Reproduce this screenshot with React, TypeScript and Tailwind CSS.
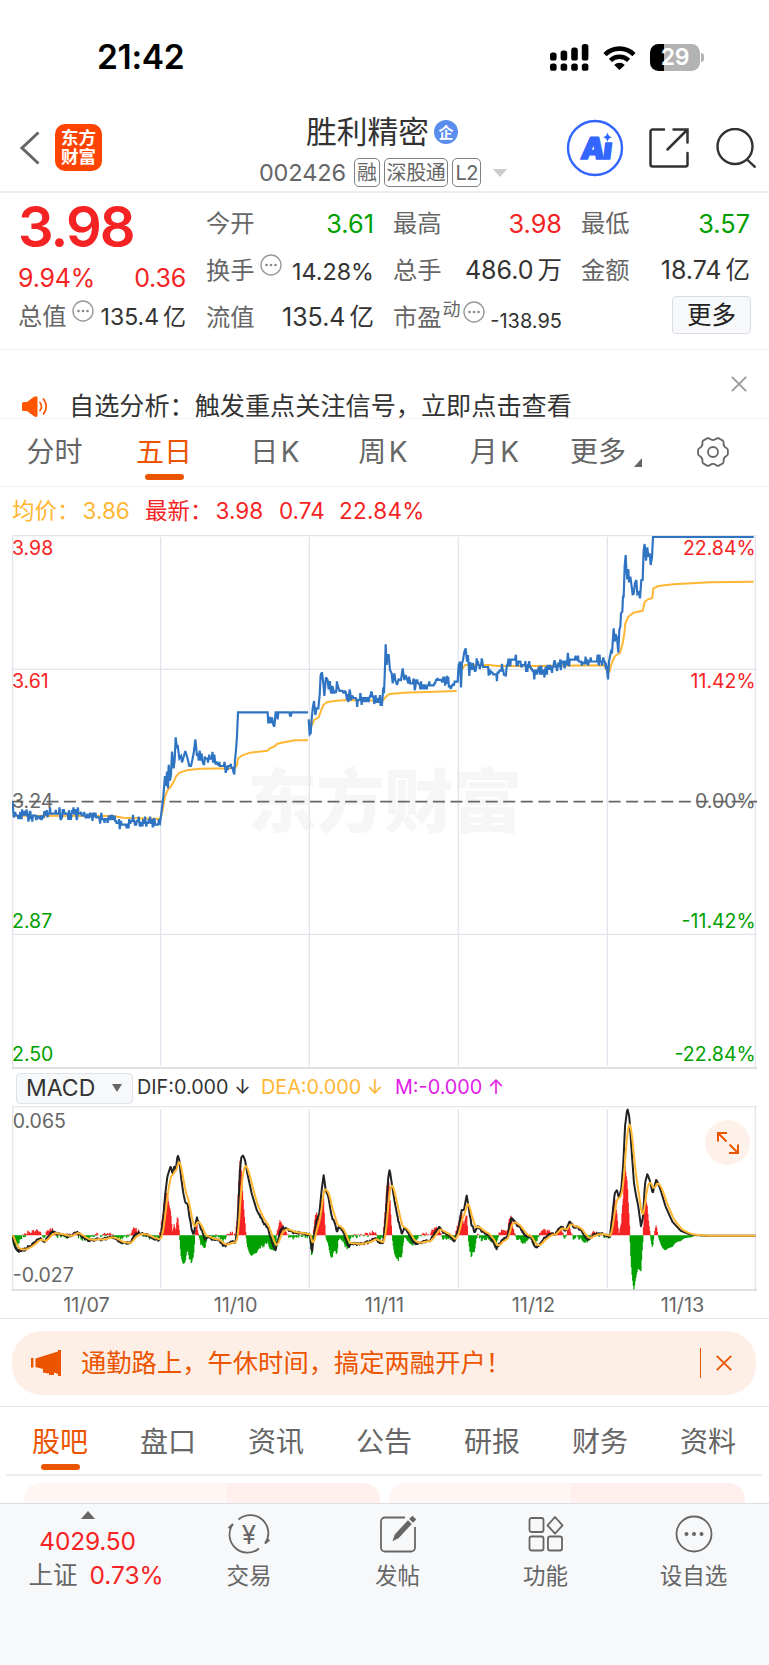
import type { ReactNode } from "react";
import clsx from "clsx";

type Point = [number, number];

// Charts are drawn in a space three times the size they take on the page
const CHART_W = 2235;
const DAYS = ["11/07", "11/10", "11/11", "11/12", "11/13"];
const DAY_LINES = [446, 892, 1339, 1786];

function shift(dx: number, dy: number, points: Point[]): Point[] {
  return points.map(([x, y]) => [x + dx, y + dy]);
}

function toPath(points: Point[]) {
  return points.map(([x, y], i) => `${i ? "L" : "M"}${x.toFixed(1)} ${y.toFixed(1)}`).join("");
}

function sample(points: Point[], step: number): Point[] {
  const out: Point[] = [];
  let i = 0;
  const end = points[points.length - 1][0];
  for (let x = points[0][0]; x <= end; x += step) {
    while (i < points.length - 2 && points[i + 1][0] < x) i++;
    const [x0, y0] = points[i];
    const [x1, y1] = points[i + 1];
    const t = x1 === x0 ? 0 : (x - x0) / (x1 - x0);
    out.push([x, y0 + (y1 - y0) * t]);
  }
  return out;
}

function random(seed: number) {
  let s = seed;
  return () => {
    s = (s * 16807) % 2147483647;
    return s / 2147483647;
  };
}

// Minute prices move in ticks of 0.01, about 11 units of height
function addTicks(points: Point[], seed: number, tick = 12): Point[] {
  const next = random(seed);
  const out: Point[] = [];
  sample(points, 1.9).forEach(([x, y]) => {
    const r = next();
    let jump = r < 0.17 ? -tick : r > 0.82 ? tick : 0;
    if (r < 0.04 || r > 0.95) jump *= 1.7;
    out.push([x, Math.round(y / 5.5) * 5.5 + jump]);
  });
  return out;
}

const day1 = addTicks(
  shift(-36, -15, [
    [38, 835], [43, 857], [112, 857], [120, 866], [132, 864], [140, 852], [240, 852], [250, 858],
    [276, 864], [342, 866], [352, 880], [385, 884], [396, 872], [428, 878], [474, 882], [480, 880],
  ]),
  17,
  11
);

const day2a = shift(-36, -15, [
  [480, 880], [485, 842], [490, 800], [495, 738], [498, 768], [501, 725], [504, 775], [506, 704],
  [510, 752], [513, 735], [516, 665], [521, 715], [524, 690], [527, 622], [531, 655], [533, 645],
  [538, 685], [543, 678], [546, 697], [556, 663], [562, 683], [568, 708], [573, 708], [577, 690],
  [581, 670], [586, 628], [591, 678], [594, 670], [596, 692], [599, 662], [603, 692],
]);
const day2b = addTicks(
  shift(-36, -15, [[605, 690], [612, 702], [616, 688], [643, 688], [655, 706], [700, 712]]),
  5,
  12
);
const day2c = shift(-36, -15, [
  [703, 733], [705, 690], [708, 660], [711, 618], [714, 547], [803, 547], [805, 580], [808, 560],
  [811, 580], [816, 562], [819, 582], [823, 590], [827, 547], [831, 547], [833, 568], [835, 547],
  [868, 547], [870, 557], [873, 557], [875, 547], [924, 547],
]);

const day3 = [
  ...shift(864, 195, [
    [26, 358], [29, 403], [32, 400], [35, 358], [38, 325], [42, 303], [46, 345], [50, 325], [55, 325],
    [59, 285], [62, 225], [66, 217], [70, 250], [73, 288], [78, 232], [83, 240], [86, 268],
  ]),
  ...addTicks(
    shift(864, 195, [
      [88, 265], [94, 280], [105, 275], [112, 255], [118, 270], [134, 278], [140, 300], [150, 287],
      [170, 298], [200, 296], [218, 288], [228, 308], [236, 303], [247, 303],
    ]),
    23
  ),
  ...shift(864, 195, [
    [250, 262], [252, 280], [255, 200], [257, 133], [260, 195], [263, 165], [266, 165], [270, 210],
    [275, 220], [278, 250], [283, 220], [286, 240], [291, 255], [296, 238], [303, 240], [308, 205],
    [313, 240], [317, 225], [325, 250],
  ]),
  ...addTicks(
    shift(864, 195, [
      [327, 250], [350, 250], [370, 258], [400, 256], [412, 236], [430, 245], [442, 240], [452, 268],
      [462, 245], [471, 242],
    ]),
    31
  ),
];

const day4 = [
  ...shift(864, 195, [
    [473, 245], [476, 195], [480, 185], [483, 262], [486, 190], [489, 180], [493, 155], [497, 145],
    [501, 185], [504, 165], [508, 228],
  ]),
  ...addTicks(
    shift(864, 195, [
      [511, 208], [530, 196], [562, 200], [572, 215], [585, 225], [600, 213], [618, 215], [624, 180],
      [636, 180], [662, 185], [668, 196], [688, 196], [700, 215], [735, 213], [748, 205], [770, 202],
      [776, 190], [798, 182], [830, 180], [855, 190], [870, 185], [915, 186], [920, 205],
    ]),
    47
  ),
];

const day5 = shift(1644, -45, [
  [137, 430], [140, 440], [144, 478], [147, 425], [150, 408], [153, 395], [156, 400], [159, 352],
  [161, 325], [164, 365], [167, 342], [171, 355], [175, 398], [178, 330], [181, 320], [183, 280],
  [187, 275], [189, 230], [191, 230], [194, 140], [197, 105], [199, 145], [202, 178], [205, 147],
  [207, 187], [211, 170], [214, 192], [218, 223], [221, 222], [225, 190], [229, 180], [232, 222],
  [236, 218], [240, 235], [244, 180], [248, 180], [251, 90], [254, 72], [258, 122], [262, 82],
  [265, 110], [269, 100], [272, 135], [276, 112], [279, 51], [581, 51],
]);

const averages = [
  shift(-36, -15, [[38, 857], [338, 858], [370, 863], [480, 867]]),
  shift(-36, -15, [
    [480, 867], [487, 845], [495, 800], [502, 782], [512, 770], [520, 757], [528, 740], [538, 728],
    [560, 721], [600, 716], [705, 715], [711, 705], [714, 686], [725, 677], [750, 668], [802, 662],
    [810, 655], [825, 648], [832, 641], [860, 635], [885, 631], [924, 631],
  ]),
  shift(864, 195, [
    [26, 360], [36, 375], [42, 360], [56, 352], [64, 330], [70, 315], [82, 306], [110, 302], [140, 300],
    [248, 302], [258, 290], [268, 282], [310, 278], [380, 276], [470, 273],
  ]),
  shift(864, 195, [
    [480, 208], [488, 205], [495, 195], [570, 195], [590, 198], [700, 198], [915, 196], [922, 215],
  ]),
  shift(1644, -45, [
    [137, 455], [148, 455], [155, 430], [165, 408], [180, 399], [188, 370], [193, 340], [196, 310],
    [205, 290], [220, 278], [248, 272], [254, 246], [262, 239], [277, 234], [280, 205], [295, 198],
    [340, 193], [450, 187], [581, 185],
  ]),
];

const MACD_ZERO = 388;

const difBase: Point[] = [
  ...shift(-36, -138, [
    [38, 530], [45, 560], [55, 573], [75, 568], [90, 558], [105, 545], [120, 535], [135, 545],
    [155, 515], [175, 522], [200, 528], [215, 525], [228, 515], [240, 525], [262, 540], [300, 538],
    [335, 532], [350, 538], [370, 550], [390, 548], [405, 525], [420, 518], [440, 525], [455, 532],
    [475, 540], [483, 525], [490, 470], [496, 400], [502, 350], [512, 318], [518, 343], [523, 318],
    [527, 330], [533, 285], [538, 300], [543, 350], [550, 400], [556, 428], [563, 432], [570, 480],
    [575, 510], [580, 525], [585, 500], [591, 475], [596, 490], [605, 510], [615, 540], [625, 530],
    [640, 538], [655, 540], [672, 558], [690, 548], [707, 545], [712, 500], [716, 420], [720, 330],
    [724, 292], [729, 286], [735, 300], [742, 340], [755, 400], [770, 450], [790, 488], [805, 508],
    [815, 545], [826, 573], [832, 545], [840, 515], [850, 503], [865, 508], [880, 518], [900, 520],
    [928, 523], [932, 545], [936, 578], [943, 520], [950, 480], [958, 460], [965, 390], [971, 345],
    [977, 390], [985, 410], [995, 470], [1003, 485], [1010, 515], [1018, 500], [1030, 515],
    [1045, 560], [1055, 550], [1075, 552], [1110, 545], [1125, 535], [1135, 545], [1150, 546],
  ]),
  ...shift(1116, -138, [
    [3, 500], [8, 420], [13, 350], [17, 328], [24, 375], [32, 425], [40, 468], [48, 503], [54, 522],
    [62, 503], [75, 525], [90, 550], [120, 545], [140, 540], [150, 525], [165, 500], [178, 515],
    [195, 525], [212, 545], [222, 510], [228, 480], [233, 450], [240, 450], [248, 405], [255, 450],
    [262, 490], [272, 515], [282, 500], [295, 515], [315, 525], [328, 545], [338, 565], [350, 545],
    [370, 532], [376, 500], [382, 475], [395, 490], [410, 505], [425, 530], [440, 528], [450, 555],
    [462, 562], [475, 540], [495, 525], [515, 522], [530, 500], [545, 510], [557, 487], [570, 500],
    [585, 505], [600, 525], [612, 540], [630, 525], [655, 522], [678, 530], [684, 480], [692, 400],
    [699, 390], [705, 415], [712, 385], [718, 310], [723, 200], [730, 145], [736, 170], [742, 260],
    [750, 370], [755, 400], [763, 440], [771, 500], [777, 470], [783, 370], [790, 342], [797, 360],
    [806, 400], [817, 358], [828, 385], [845, 440], [865, 485], [890, 512], [920, 524], [960, 527],
    [1116, 527],
  ]),
];

// DEA follows DIF as a moving average, the bars show twice the gap between them
function buildMacd() {
  const next = random(91);
  const dif = sample(difBase, 1.9).map(([x, y]): Point => {
    const quiet = Math.abs(y - MACD_ZERO) < 60 && x < 1800;
    return [x, quiet ? y + (next() - 0.5) * 8 : y];
  });
  let prev = MACD_ZERO;
  const dea = dif.map(([x, y]): Point => {
    prev += (y - prev) * 0.2;
    return [x, prev];
  });
  const bars = dif.map(([x, y], i): Point => [x, (y - dea[i][1]) * 2]);
  const area = (up: boolean) =>
    bars
      .filter(([, h]) => (up ? h < -1 : h > 1))
      .map(([x, h]) => `M${x.toFixed(1)} ${MACD_ZERO}v${h.toFixed(1)}`)
      .join("");
  return { dif: toPath(dif), dea: toPath(dea), up: area(true), down: area(false) };
}

const macd = buildMacd();

function InfoDots({ className }: { className?: string }) {
  return (
    <svg viewBox="0 0 22 22" className={clsx("size-[22px] shrink-0", className)}>
      <circle cx="11" cy="11" r="10" fill="none" stroke="#999" strokeWidth="1.4" />
      <circle cx="6.5" cy="11" r="1.3" fill="#888" />
      <circle cx="11" cy="11" r="1.3" fill="#888" />
      <circle cx="15.5" cy="11" r="1.3" fill="#888" />
    </svg>
  );
}

function StatusBar() {
  return (
    <div className="flex h-[105px] items-center justify-between pt-[10px] pr-[65px] pl-[97px]">
      <span className="text-[33.5px] font-semibold tracking-[-0.3px] text-black">21:42</span>
      <div className="flex items-center gap-[14px]">
        <svg viewBox="0 0 39 27" className="h-[27px] w-[39px]">
          {[8.5, 6.5, 3.5, 0].map((y, i) => (
            <g key={i}>
              <rect x={i * 10.6} y={y} width="6.6" height={16.5 - y} rx="2.6" />
              <rect x={i * 10.6} y="19.5" width="6.6" height="7.3" rx="2.6" />
            </g>
          ))}
        </svg>
        <svg viewBox="0 0 33 24" className="h-[24px] w-[33px]">
          <path d="M2 8.6a20.6 20.6 0 0 1 29 0" fill="none" stroke="#000" strokeWidth="4.6" />
          <path d="M7.4 14.4a13 13 0 0 1 18.2 0" fill="none" stroke="#000" strokeWidth="4.4" />
          <path d="M11.2 18.9a7.6 7.6 0 0 1 10.6 0L16.5 24z" />
        </svg>
        <div className="flex items-center gap-[1px]">
          <div className="flex h-[27px] w-[50px] items-center justify-center rounded-[8.5px] bg-[linear-gradient(90deg,#000_29%,#b3b3b3_29%)] text-[23px] font-semibold tracking-[-0.3px] text-white">
            29
          </div>
          <div className="h-[9px] w-[3px] rounded-r-full bg-[#b3b3b3]" />
        </div>
      </div>
    </div>
  );
}

function Tag({ children }: { children: ReactNode }) {
  return (
    <span className="flex h-[29px] items-center rounded-[5px] border-[1.5px] border-[#808080] px-[2px] text-[20px] leading-none tracking-[-0.4px] text-[#666]">
      {children}
    </span>
  );
}

function Header() {
  return (
    <header className="flex h-[88px] border-b-2 border-[#eee]">
      <div className="flex w-[200px] items-center pl-[19px]">
        <svg viewBox="0 0 22 34" className="h-[34px] w-[22px]" fill="none" stroke="#666" strokeWidth="3">
          <path d="M19.5 1.5L3 17l16.5 15.5" />
        </svg>
        <div className="-mt-[2px] ml-[14px] flex h-[47px] w-[47px] flex-col items-center justify-center rounded-[10px] bg-[#ff4400] pb-[1px] text-[17.5px] leading-[19px] font-bold text-white">
          <span>东方</span>
          <span>财富</span>
        </div>
      </div>
      <div className="flex w-[366px] flex-col items-center pt-[8px]">
        <div className="flex h-[38px] items-center gap-[5px] pr-[2px]">
          <h1 className="text-[30.8px] leading-none text-[#333]">胜利精密</h1>
          <span className="flex size-[24px] items-center justify-center rounded-full bg-[#5b8def] text-[15px] leading-none font-bold text-white">
            企
          </span>
        </div>
        <div className="mt-[6px] flex h-[31px] items-center gap-[4px]">
          <span className="mr-[4px] text-[23.5px] leading-none tracking-[-0.1px] text-[#666]">002426</span>
          <Tag>融</Tag>
          <Tag>深股通</Tag>
          <Tag>L2</Tag>
          <svg viewBox="0 0 14 8" className="ml-[8px] h-[8px] w-[14px]" fill="#ccc">
            <path d="M0 0h14L7 8z" />
          </svg>
        </div>
      </div>
      <div className="flex items-center">
        <svg viewBox="0 0 58 58" className="size-[58px]">
          <text
            x="14.5"
            y="40"
            fontSize="30"
            fontWeight="900"
            fill="#3366ff"
            stroke="#3366ff"
            strokeWidth="1.4"
            strokeLinejoin="round"
            transform="translate(4.500 0) skewX(-7)"
            textLength="31"
          >
            Ai
          </text>
          <path d="M35 10h15v13.200H35z" fill="#fff" />
          <circle cx="29" cy="29" r="27" fill="none" stroke="#3366ff" strokeWidth="2.400" />
          <path d="M41.5 13.500q.8 4 4.700 4.800q-3.900.8-4.700 4.800q-.8-4-4.700-4.800q3.900-.8 4.700-4.800z" fill="#3366ff" />
        </svg>
        <svg
          viewBox="0 0 40 40"
          className="ml-[25px] size-[40px]"
          fill="none"
          stroke="#333"
          strokeWidth="2.5"
          strokeLinecap="round"
        >
          <path d="M15 1.5H3.5a2 2 0 0 0-2 2v33a2 2 0 0 0 2 2h33a2 2 0 0 0 2-2V25M24.5 1.5h14V14.5M38 2L18.5 21.5" />
        </svg>
        <svg viewBox="0 0 40 40" className="ml-[27px] size-[40px]" fill="none" stroke="#333" strokeWidth="2.4">
          <circle cx="19" cy="18.5" r="17.5" />
          <path d="M31 31.5l8.5 8" />
        </svg>
      </div>
    </header>
  );
}

function Stat({ label, value, tone }: { label: ReactNode; value: string; tone?: string }) {
  const unit = value.match(/[亿万]$/)?.[0];
  return (
    <div className="flex h-[47px] items-center justify-between text-[24.3px] leading-none whitespace-nowrap">
      <span className="flex items-center text-[#666]">{label}</span>
      <span className={tone ?? "text-[25px] text-[#333]"}>
        {unit ? value.slice(0, -1) : value}
        {unit && <span className="ml-[4px] text-[24.5px]">{unit}</span>}
      </span>
    </div>
  );
}

function Quote() {
  return (
    <section className="grid h-[157px] grid-cols-[168px_168px_168px_168px] gap-x-[20px] border-b border-[#f0f0f0] pl-[18px]">
      <div>
        <div className="flex h-[68px] items-center text-[56px] leading-none font-semibold tracking-[-1.9px] text-[#f52323]">
          3.98
        </div>
        <div className="flex h-[34px] items-center justify-between text-[25px] leading-none tracking-[-0.2px] text-[#f52323]">
          <span>9.94%</span>
          <span>0.36</span>
        </div>
        <div className="flex h-[43px] items-center justify-between text-[24.3px] leading-none text-[#666]">
          <span className="flex">
            总值
            <InfoDots className="-mt-[4px] ml-[5px]" />
          </span>
          <span className="pt-[2px] text-[23px] text-[#333]">
            135.4<span className="ml-[4px]">亿</span>
          </span>
        </div>
      </div>
      <div className="pt-[7px]">
        <Stat label="今开" value="3.61" tone="text-[#00a000] text-[25.3px]" />
        <Stat
          label={
            <>
              换手
              <InfoDots className="-mt-[10px] ml-[5px]" />
            </>
          }
          value="14.28%"
          tone="text-[#333] text-[23.3px] pt-[2px]"
        />
        <Stat label="流值" value="135.4亿" />
      </div>
      <div className="-ml-[1px] w-[169px] pt-[7px]">
        <Stat label="最高" value="3.98" tone="text-[#f52323] text-[25.3px]" />
        <Stat label="总手" value="486.0万" />
        <Stat
          label={
            <>
              市盈
              <span className="-mt-[14px] ml-[1px] text-[18px]">动</span>
              <InfoDots className="-mt-[10px] ml-[2px]" />
            </>
          }
          value="-138.95"
          tone="text-[#333] text-[20px] pt-[6px]"
        />
      </div>
      <div className="-ml-[1px] w-[169px] pt-[7px]">
        <Stat label="最低" value="3.57" tone="text-[#00a000] text-[25.3px]" />
        <Stat label="金额" value="18.74亿" />
        <button className="mt-[2px] -mr-[1px] ml-auto flex h-[38px] w-[79px] items-center justify-center rounded-[4px] border border-[#d9dce3] bg-[#f7f8fa] text-[24.5px] leading-none text-[#222]">
          更多
        </button>
      </div>
    </section>
  );
}

function Notice() {
  return (
    <section className="flex h-[69px] items-start border-b border-[#f3f3f3] pr-[22px] pl-[22px]">
      <svg viewBox="0 0 26 21" className="mt-[46px] h-[21px] w-[26px]" fill="#ff5500">
        <path d="M0 7.5q0-1.5 1.5-1.5H5L12 .8Q15.5-1 15.5 2v17q0 3-3.5 1.2L5 15H1.5Q0 15 0 13.5z" />
        <path d="M18 6.5q3 4 0 8M21.5 3q5.5 7.5 0 15" fill="none" stroke="#ff5500" strokeWidth="1.7" strokeLinecap="round" />
      </svg>
      <p className="mt-[44px] ml-[21px] flex-1 text-[25.150px] leading-[24px] whitespace-nowrap text-[#333]">
        自选分析：触发重点关注信号，立即点击查看
      </p>
      <svg viewBox="0 0 16 16" className="mt-[26px] size-[16px]" stroke="#999" strokeWidth="1.8">
        <path d="M.8.8l14.400 14.400M15.200.8L.8 15.200" />
      </svg>
    </section>
  );
}

function PeriodTabs() {
  const tabs = [
    { name: "分时", width: "w-[109px]" },
    { name: "五日", width: "w-[110px]", active: true },
    { name: "日K", width: "w-[112px]" },
    { name: "周K", width: "w-[104px]" },
    { name: "月K", width: "w-[119px]" },
  ];
  return (
    <nav className="flex h-[68px] border-b border-[#f0f0f0] text-[28px] leading-none text-[#666]">
      {tabs.map((t) => (
        <div
          key={t.name}
          className={clsx("flex shrink-0 flex-col items-center pt-[19px]", t.width, t.active && "text-[#eb5500]")}
        >
          <span>{t.name.replace("K", "\u200aK")}</span>
          {t.active && <span className="mt-[8px] h-[6px] w-[39px] rounded-[3px] bg-[#eb5500]" />}
        </div>
      ))}
      <div className="flex items-start pt-[19px] pl-[16px]">
        更多
        <svg viewBox="0 0 8 9" className="mt-[20px] ml-[8px] h-[9px] w-[8px]" fill="#666">
          <path d="M8 0v9H0z" />
        </svg>
      </div>
      <svg viewBox="0 0 32 30" className="mt-[18px] ml-[55px] h-[30px] w-[32px]" fill="none" stroke="#666" strokeWidth="1.8">
        <path
          d="M10.500 1.200q1.500-.3 2.500.9q3 1.900 6 0q1-1.200 2.500-.9l4.500 2.600q.8.900.5 2.400q0 3.500 3.200 5q1.200.6 1.200 2v3.600q0 1.400-1.200 2q-3.200 1.500-3.200 5q.3 1.500-.5 2.400l-4.500 2.600q-1.500.3-2.500-.9q-3-1.900-6 0q-1 1.200-2.500.9L6 26.200q-.8-.9-.5-2.400q0-3.500-3.200-5q-1.200-.6-1.200-2v-3.600q0-1.400 1.200-2q3.200-1.500 3.200-5Q5.200 4.700 6 3.800z"
        />
        <circle cx="16" cy="15" r="5" />
      </svg>
    </nav>
  );
}

function PriceChart() {
  const labels = [
    { y: 40, left: "3.98", right: "22.84%", fill: "#f52323" },
    { y: 440, left: "3.61", right: "11.42%", fill: "#f52323" },
    { y: 799, left: "3.24", right: "0.00%", fill: "#666" },
    { y: 1160, left: "2.87", right: "-11.42%", fill: "#00a000" },
    { y: 1558, left: "2.50", right: "-22.84%", fill: "#00a000" },
  ];
  return (
    <svg viewBox={`0 0 ${CHART_W} 1605`} className="mx-[12px] block h-[535px] w-[745px]">
      <text
        x="1118"
        y="876"
        textAnchor="middle"
        fontSize="207"
        fontWeight="900"
        fill="#f6f6f7"
        textLength="822"
      >
        东方财富
      </text>
      <g stroke="#e2e5ec" strokeWidth="4" fill="none">
        <path d="M0 2H2235M2 2V1600M2230 2V1600M0 403H2235M0 1198H2235" />
        {DAY_LINES.map((x) => (
          <path key={x} d={`M${x} 6V1592`} />
        ))}
      </g>
      <path d="M0 1599H2235" stroke="#d3d6de" strokeWidth="5" />
      <path d="M0 800H2235" stroke="#666" strokeWidth="5.5" strokeDasharray="36 16.7" strokeDashoffset="2" />
      <g fill="none" stroke="#ffb632" strokeWidth="6" strokeLinejoin="round">
        {averages.map((a, i) => (
          <path key={i} d={toPath(a)} />
        ))}
      </g>
      <g fill="none" stroke="#2f74c3" strokeWidth="6.5" strokeLinejoin="miter" strokeMiterlimit="3">
        <path d={toPath([...day1, ...day2a, ...day2b, ...day2c])} />
        <path d={toPath([...day3, ...day4, ...day5])} />
      </g>
      <g fontSize="58.5">
        {labels.map((l) => (
          <g key={l.left} fill={l.fill}>
            <text x="0" y={l.y + 19}>
              {l.left}
            </text>
            <text x="2231" y={l.y + 19} textAnchor="end">
              {l.right}
            </text>
          </g>
        ))}
      </g>
    </svg>
  );
}

function MacdPanel() {
  return (
    <>
      <div className="flex h-[36px] items-center pl-[16px] text-[19.800px] leading-none whitespace-nowrap">
        <button className="flex h-[31px] w-[117px] items-center justify-between rounded-[4px] border border-[#dfe2e8] bg-[#f7f8fa] pr-[10px] pl-[9px] text-[23px] text-[#333]">
          MACD
          <svg viewBox="0 0 10 8" className="h-[8px] w-[10px]" fill="#666">
            <path d="M0 0h10L5 8z" />
          </svg>
        </button>
        <span className="ml-[4px] w-[124px] text-[#333]">DIF:0.000 ↓</span>
        <span className="w-[134px] text-[#ffb632]">DEA:0.000 ↓</span>
        <span className="text-[#e020e6]">M:-0.000 ↑</span>
      </div>
      <div className="relative mx-[12px]">
        <svg viewBox={`0 0 ${CHART_W} 555`} className="block h-[185px] w-[745px]">
          <path d="M0 2H2235M2 2V552M2230 2V552" stroke="#e2e5ec" strokeWidth="4" fill="none" />
          <g stroke="#e2e5ec" strokeWidth="4">
            {DAY_LINES.map((x) => (
              <path key={x} d={`M${x} 10V546`} />
            ))}
          </g>
          <path d="M0 552H2235" stroke="#d3d6de" strokeWidth="5" />
          <path d={macd.up} stroke="#f52323" strokeWidth="3.6" />
          <path d={macd.down} stroke="#00a000" strokeWidth="3.6" />
          <g fill="none" strokeWidth="6" strokeLinejoin="round">
            <path d={macd.dif} stroke="#222" />
            <path d={macd.dea} stroke="#ffb632" />
          </g>
          <g fontSize="58.5" fill="#666">
            <text x="2" y="66">
              0.065
            </text>
            <text x="2" y="529">
              -0.027
            </text>
          </g>
        </svg>
        <button className="absolute top-[14px] right-[7px] flex size-[45px] items-center justify-center rounded-full bg-[#fdf1ea]">
          <svg viewBox="0 0 22 22" className="size-[22px]" fill="none" stroke="#eb5500" strokeWidth="2">
            <path d="M1 9.500V1h9M1.500 1.500l8 8M21 12.500V21h-9M20.500 20.500l-8-8" />
          </svg>
        </button>
      </div>
      <div className="mr-[12px] ml-[12px] grid h-[27px] grid-cols-5 pt-[4px] text-center text-[19.800px] leading-[20px] text-[#666]">
        {DAYS.map((d) => (
          <span key={d}>{d}</span>
        ))}
      </div>
    </>
  );
}

function Banner() {
  return (
    <div className="border-y border-[#e5e6eb] pt-[12px] pr-[13px] pb-[11px] pl-[12px]">
      <div className="flex h-[64px] items-center rounded-[30px] bg-[#fdeee6] pr-[24px] pl-[19px] text-[#eb5500]">
        <svg viewBox="0 0 30 26" className="h-[26px] w-[30px]" fill="#eb5500">
          <path d="M0 8h2.400v9.500H0zM4.500 8.500L27 1.500V0h3v26h-3v-2l-4-1.500V25h-5v-2l-1 .5l-5-1V19l-7.500-2z" />
        </svg>
        <p className="ml-[20px] flex-1 text-[25.3px] leading-none whitespace-nowrap">
          通勤路上，午休时间，搞定两融开户！
        </p>
        <span className="h-[30px] w-[1.5px] bg-[#eb5500]" />
        <svg viewBox="0 0 16 16" className="ml-[15px] size-[16px]" stroke="#eb5500" strokeWidth="1.8">
          <path d="M.8.8l14.400 14.400M15.200.8L.8 15.200" />
        </svg>
      </div>
    </div>
  );
}

function SectionTabs() {
  const tabs = ["股吧", "盘口", "资讯", "公告", "研报", "财务", "资料"];
  return (
    <>
      <nav className="mr-[7px] ml-[6px] grid h-[69px] grid-cols-7 border-b-2 border-[#eee] text-[28px] leading-none text-[#666]">
        {tabs.map((t, i) => (
          <div key={t} className={clsx("flex flex-col items-center pt-[21px]", i === 0 && "text-[#eb5500]")}>
            {t}
            {i === 0 && <span className="mt-[8px] h-[6px] w-[39px] rounded-[3px] bg-[#eb5500]" />}
          </div>
        ))}
      </nav>
      <div className="flex h-[27px] gap-[9px] overflow-hidden px-[24px] pt-[7px]">
        <div className="h-[60px] w-[356px] rounded-[16px] bg-[linear-gradient(90deg,#fff5f2_57%,#fff0ed_57%)]" />
        <div className="h-[60px] w-[356px] rounded-[16px] bg-[linear-gradient(90deg,#fff5f2_51%,#fff0ed_51%)]" />
      </div>
    </>
  );
}

function BarItem({ label, width, children }: { label: string; width: string; children: ReactNode }) {
  return (
    <div className={clsx("flex flex-col items-center pt-[10px] text-[22.5px] leading-none text-[#666]", width)}>
      <svg viewBox="0 0 42 40" className="mb-[11px] h-[40px] w-[42px]" fill="none" stroke="#666" strokeWidth="1.8">
        {children}
      </svg>
      {label}
    </div>
  );
}

function BottomBar() {
  return (
    <footer className="flex flex-1 border-t border-[#dcdee3] bg-[#f7f8fa]">
      <div className="flex w-[175px] flex-col items-center pt-[7px] text-[24.5px] leading-none">
        <svg viewBox="0 0 14 8" className="h-[8px] w-[14px]" fill="#666">
          <path d="M0 8h14L7 0z" />
        </svg>
        <span className="mt-[10px] tracking-[-0.2px] text-[#f52323]">4029.50</span>
        <span className="mt-[9px] flex gap-[12px] pl-[17px] whitespace-nowrap text-[#666]">
          上证
          <span className="text-[#f52323]">0.73%</span>
        </span>
      </div>
      <BarItem label="交易" width="w-[148px]">
        <path d="M10.500 5.500a18 18 0 0 1 26.500 24l4.500-3.800M31 34.500A18 18 0 0 1 5 10L.5 14" />
        <text x="21" y="29.5" textAnchor="middle" fontSize="26" fill="#666" stroke="none">
          ¥
        </text>
      </BarItem>
      <BarItem label="发帖" width="w-[149px]">
        <path d="M28 3.500H8a4 4 0 0 0-4 4v26a4 4 0 0 0 4 4h26a4 4 0 0 0 4-4V13" />
        <path d="M17 25.500l1.500-4.500L31 7.500l2.500 2.500L21 23.500z" fill="#666" />
        <path d="M33.500 5l2-2 2.500 2.500-2 2z" fill="#666" />
      </BarItem>
      <BarItem label="功能" width="w-[147px]">
        <rect x="4.5" y="4" width="14" height="14" rx="2" />
        <rect x="4.5" y="22.5" width="14" height="14" rx="2" />
        <rect x="23" y="22.5" width="14" height="14" rx="2" />
        <path d="M30 3l7.500 8.300-7.500 8.300-7.500-8.300z" strokeLinejoin="round" />
      </BarItem>
      <BarItem label="设自选" width="w-[149px]">
        <circle cx="21" cy="20" r="17.5" />
        <g fill="#666" stroke="none">
          <circle cx="13.5" cy="20" r="2" />
          <circle cx="21" cy="20" r="2" />
          <circle cx="28.5" cy="20" r="2" />
        </g>
      </BarItem>
    </footer>
  );
}

export default function App() {
  return (
    <div className="flex h-[1665px] w-[769px] flex-col overflow-hidden bg-white font-['Inter','Noto_Sans_CJK_SC',sans-serif]">
      <StatusBar />
      <Header />
      <Quote />
      <Notice />
      <PeriodTabs />
      <div className="flex h-[48px] items-center pl-[12px] text-[22.5px] leading-none whitespace-nowrap text-[#f52323]">
        <span className="flex w-[133px] gap-[3px] text-[#ffb632]">
          均价：<span>3.86</span>
        </span>
        <span className="flex w-[134px] gap-[3px]">
          最新：<span>3.98</span>
        </span>
        <span className="w-[60px]">0.74</span>
        <span className="tracking-[0.3px]">22.84%</span>
      </div>
      <PriceChart />
      <MacdPanel />
      <Banner />
      <SectionTabs />
      <BottomBar />
    </div>
  );
}
